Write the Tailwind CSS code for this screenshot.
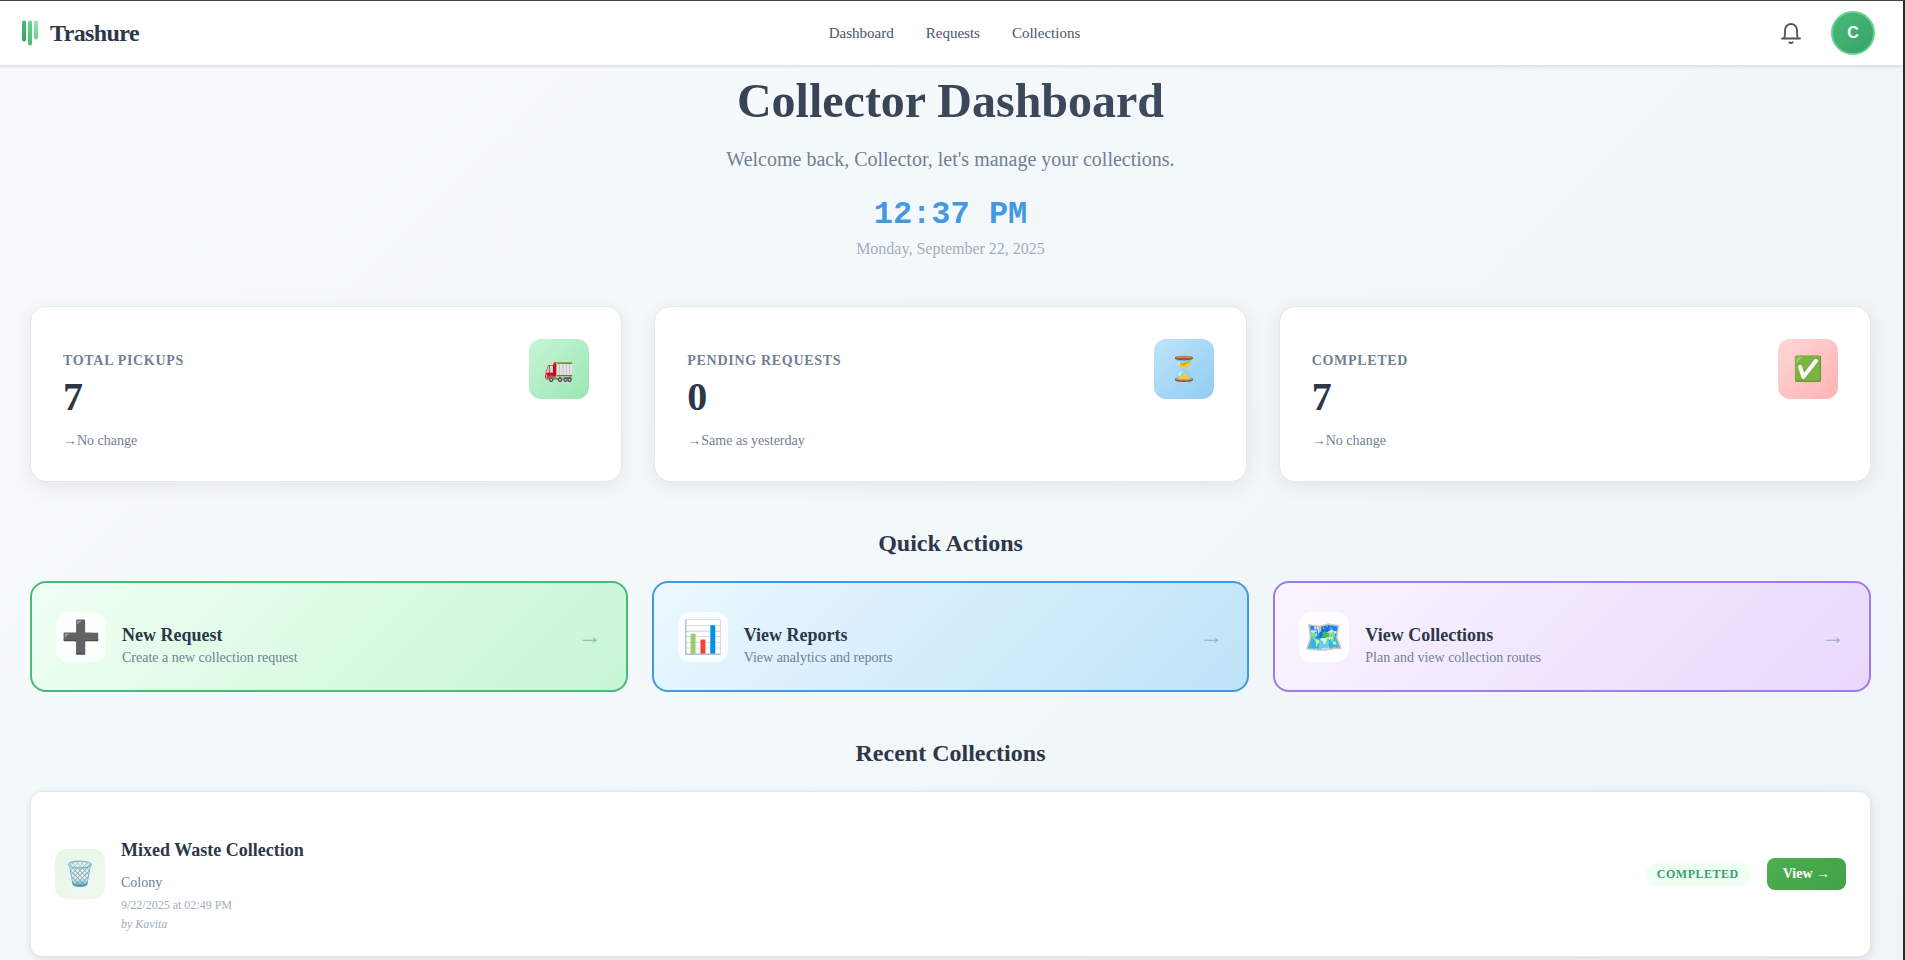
<!DOCTYPE html>
<html lang="en">
<head>
<meta charset="utf-8">
<meta name="viewport" content="width=device-width, initial-scale=1">
<title>Trashure</title>
<script src="https://cdn.jsdelivr.net/npm/@tailwindcss/browser@4"></script>
</head>
<body class="min-h-screen overflow-x-hidden border-t border-r-2 border-t-[#444444] border-r-[#2b2b2b] bg-linear-135 from-[#f7fbfd] to-[#eff4f8] font-['Liberation_Serif',serif] text-[#2d3748]">
  <header class="relative flex h-16 items-center justify-between bg-white pr-7 pl-[22px] shadow-[0_1px_3px_1px_rgba(0,0,0,0.1)]">
    <a href="#" class="flex items-center gap-3">
      <svg class="h-[26px] w-4" viewBox="0 0 16 26" aria-hidden="true">
        <defs>
          <linearGradient id="b1" x1="0" y1="1" x2="0" y2="0"><stop stop-color="#38a169"/><stop offset="1" stop-color="#48bb78"/></linearGradient>
          <linearGradient id="b2" x1="0" y1="1" x2="0" y2="0"><stop stop-color="#48bb78"/><stop offset="1" stop-color="#68d391"/></linearGradient>
          <linearGradient id="b3" x1="0" y1="1" x2="0" y2="0"><stop stop-color="#68d391"/><stop offset="1" stop-color="#9ae6b4"/></linearGradient>
        </defs>
        <rect x="0" y="0.5" width="4" height="21" rx="2" fill="url(#b1)"/>
        <rect x="6" y="0.5" width="4" height="25" rx="2" fill="url(#b2)"/>
        <rect x="12" y="0.5" width="4" height="19" rx="2" fill="url(#b3)"/>
      </svg>
      <span class="text-2xl font-bold tracking-tight">Trashure</span>
    </a>
    <nav class="absolute inset-x-0 mx-auto flex w-fit gap-8 pl-1.5 text-[15px] text-[#4a5568]">
      <a href="#">Dashboard</a>
      <a href="#">Requests</a>
      <a href="#">Collections</a>
    </nav>
    <div class="flex items-center gap-7">
      <button type="button" aria-label="Notifications" class="text-[#4a5568]">
        <svg class="size-6" viewBox="0 0 24 24" fill="none" stroke="currentColor" stroke-width="1.8" stroke-linecap="round" stroke-linejoin="round" aria-hidden="true">
          <path d="M3 17.5h18M5 17.5c.9-1.600 1-3.500 1-6V9a6 6 0 0 1 12 0v2.500c0 2.500.1 4.400 1 6"/><path d="M10.300 21.300a2.400 2.400 0 0 0 3.400 0"/>
        </svg>
      </button>
      <button type="button" aria-label="Account" class="size-11 rounded-full border-2 border-[#68d391] bg-linear-135 from-[#48bb78] to-[#38a169] font-['Liberation_Sans',sans-serif] text-base font-bold text-white">C</button>
    </div>
  </header>

  <main class="pr-8 pl-[30px]">
    <section class="flex flex-col items-center pt-2 text-center">
      <h1 class="w-full bg-linear-135 from-[#2d3748] to-[#4a5568] bg-clip-text text-5xl leading-[56px] font-bold text-transparent">Collector Dashboard</h1>
      <p class="mt-4 text-xl leading-7 text-[#718096]">Welcome back, Collector, let's manage your collections.</p>
      <p class="mt-6 font-['Liberation_Mono',monospace] text-[32px] leading-9 font-bold text-[#4299e1]">12:37 PM</p>
      <p class="mt-1 text-base leading-6 text-[#a0aec0]">Monday, September 22, 2025</p>
    </section>

    <section class="mt-[45px] grid grid-cols-3 gap-8">
      <article class="flex items-start justify-between rounded-2xl border border-[#e2e8f0] bg-white p-8 shadow-[0_4px_20px_rgba(0,0,0,0.08)]">
        <div class="pt-3">
          <h2 class="text-sm leading-5 font-bold tracking-wider text-[#718096]">TOTAL PICKUPS</h2>
          <p class="mt-1.5 text-[40px] leading-10 font-bold">7</p>
          <p class="mt-4 text-sm leading-4 text-[#718096]">→No change</p>
        </div>
        <div class="flex size-[60px] items-center justify-center rounded-xl bg-linear-135 from-[#c6f6d5] to-[#9ae6b4] text-2xl">🚛</div>
      </article>
      <article class="flex items-start justify-between rounded-2xl border border-[#e2e8f0] bg-white p-8 shadow-[0_4px_20px_rgba(0,0,0,0.08)]">
        <div class="pt-3">
          <h2 class="text-sm leading-5 font-bold tracking-wider text-[#718096]">PENDING REQUESTS</h2>
          <p class="mt-1.5 text-[40px] leading-10 font-bold">0</p>
          <p class="mt-4 text-sm leading-4 text-[#718096]">→Same as yesterday</p>
        </div>
        <div class="flex size-[60px] items-center justify-center rounded-xl bg-linear-135 from-[#bee3f8] to-[#90cdf4] text-2xl">⏳</div>
      </article>
      <article class="flex items-start justify-between rounded-2xl border border-[#e2e8f0] bg-white p-8 shadow-[0_4px_20px_rgba(0,0,0,0.08)]">
        <div class="pt-3">
          <h2 class="text-sm leading-5 font-bold tracking-wider text-[#718096]">COMPLETED</h2>
          <p class="mt-1.5 text-[40px] leading-10 font-bold">7</p>
          <p class="mt-4 text-sm leading-4 text-[#718096]">→No change</p>
        </div>
        <div class="flex size-[60px] items-center justify-center rounded-xl bg-linear-135 from-[#fed7d7] to-[#feb2b2] text-2xl">✅</div>
      </article>
    </section>

    <section class="mt-[45px]">
      <h2 class="text-center text-2xl leading-8 font-bold">Quick Actions</h2>
      <div class="mt-[22px] grid grid-cols-3 gap-6">
        <a href="#" class="flex h-[111px] items-center gap-4 rounded-2xl border-2 border-[#48bb78] bg-linear-135 from-[#f0fff4] to-[#c6f6d5] px-6">
          <span class="flex size-[50px] items-center justify-center rounded-xl bg-white/80 text-[32px]">➕</span>
          <span class="flex flex-1 flex-col pt-[18px]">
            <span class="text-lg leading-6 font-bold">New Request</span>
            <span class="text-sm leading-[22px] text-[#718096]">Create a new collection request</span>
          </span>
          <span class="pb-0.5 text-2xl text-[#a0aec0]">→</span>
        </a>
        <a href="#" class="flex h-[111px] items-center gap-4 rounded-2xl border-2 border-[#4299e1] bg-linear-135 from-[#ebf8ff] to-[#bee3f8] px-6">
          <span class="flex size-[50px] items-center justify-center rounded-xl bg-white/80 text-[32px]">📊</span>
          <span class="flex flex-1 flex-col pt-[18px]">
            <span class="text-lg leading-6 font-bold">View Reports</span>
            <span class="text-sm leading-[22px] text-[#718096]">View analytics and reports</span>
          </span>
          <span class="pb-0.5 text-2xl text-[#a0aec0]">→</span>
        </a>
        <a href="#" class="flex h-[111px] items-center gap-4 rounded-2xl border-2 border-[#9f7aea] bg-linear-135 from-[#faf5ff] to-[#e9d8fd] px-6">
          <span class="flex size-[50px] items-center justify-center rounded-xl bg-white/80 text-[32px]">🗺️</span>
          <span class="flex flex-1 flex-col pt-[18px]">
            <span class="text-lg leading-6 font-bold">View Collections</span>
            <span class="text-sm leading-[22px] text-[#718096]">Plan and view collection routes</span>
          </span>
          <span class="pb-0.5 text-2xl text-[#a0aec0]">→</span>
        </a>
      </div>
    </section>

    <section class="mt-[45px]">
      <h2 class="text-center text-2xl leading-8 font-bold">Recent Collections</h2>
      <article class="mt-[22px] flex items-center gap-4 rounded-xl border border-[#e2e8f0] bg-white px-6 pt-11 pb-[22px] shadow-[0_2px_8px_rgba(0,0,0,0.1)]">
        <div class="mb-[22px] flex size-[50px] items-center justify-center rounded-xl bg-linear-135 from-[#e8f5e9] to-[#f0f9f0] text-2xl">🗑️</div>
        <div class="flex-1">
          <h3 class="text-lg leading-7 font-bold">Mixed Waste Collection</h3>
          <p class="mt-2 text-sm leading-[22px] text-[#718096]">Colony</p>
          <p class="mt-0.5 text-xs leading-[19px] text-[#a0aec0]">9/22/2025 at 02:49 PM</p>
          <p class="text-xs leading-[19px] text-[#a0aec0] italic">by Kavita</p>
        </div>
        <div class="mb-[22px] flex items-center gap-4">
          <span class="rounded-full bg-[#f0fff4] px-3 py-1 text-xs leading-[15px] font-bold tracking-[0.5px] text-[#38a169]">COMPLETED</span>
          <button type="button" class="h-8 rounded-lg bg-linear-135 from-[#4caf50] to-[#43a047] px-4 text-sm font-bold text-white">View →</button>
        </div>
      </article>
    </section>
  </main>
</body>
</html>
